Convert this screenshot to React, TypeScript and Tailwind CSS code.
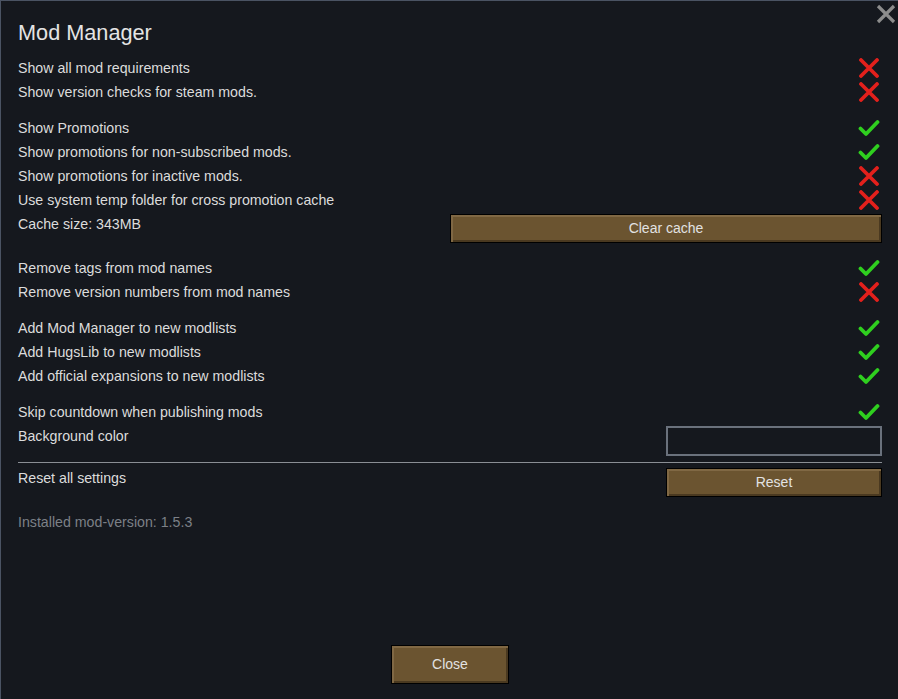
import React from 'react'

const font = { fontFamily: '"Liberation Sans", Arial, sans-serif' }

function Cross() {
  return (
    <svg width="22" height="20" viewBox="0 0 22 20" className="shrink-0">
      <path d="M3 2 L19 18 M19 2 L3 18" stroke="#e3201c" strokeWidth="3.8" strokeLinecap="round" />
    </svg>
  )
}

function Check() {
  return (
    <svg width="22" height="18" viewBox="0 0 22 18" className="shrink-0">
      <path d="M2.5 9.5 L8 15 L19.5 3" stroke="#2fcf1f" strokeWidth="3.8" strokeLinecap="round" strokeLinejoin="round" fill="none" />
    </svg>
  )
}

function Toggle({ label, on }: { label: string; on: boolean }) {
  return (
    <div className="flex h-6 items-center justify-between">
      <span className="leading-6">{label}</span>
      <span className="mr-[1px] flex w-[24px] justify-center">{on ? <Check /> : <Cross />}</span>
    </div>
  )
}

function BrownButton({ children, className }: { children: React.ReactNode; className: string }) {
  return (
    <button
      className={`border border-black bg-[#6b5430] text-[14px] text-[#e2e2e2] shadow-[inset_2px_2px_0_#806844,inset_-2px_-2px_0_#4a3920] ${className}`}
    >
      {children}
    </button>
  )
}

export default function App() {
  return (
    <div
      style={font}
      className="relative flex h-[699px] w-[898px] flex-col border-l border-t border-[#4a5363] bg-[#15181e] pl-[17px] pr-[16px] text-[14.2px] text-[#dcdcdc]"
    >
      <button className="absolute right-[2px] top-[3px]">
        <svg width="20" height="20" viewBox="0 0 20 20">
          <path d="M2 2 L18 18 M18 2 L2 18" stroke="#8c8c8c" strokeWidth="3.2" />
        </svg>
      </button>

      <h1 className="mt-[18px] mb-[9px] h-[28px] text-[21.7px] leading-[28px] text-[#e4e4e4]">Mod Manager</h1>

      <Toggle label="Show all mod requirements" on={false} />
      <Toggle label="Show version checks for steam mods." on={false} />

      <div className="mt-3">
        <Toggle label="Show Promotions" on={true} />
        <Toggle label="Show promotions for non-subscribed mods." on={true} />
        <Toggle label="Show promotions for inactive mods." on={false} />
        <Toggle label="Use system temp folder for cross promotion cache" on={false} />
        <div className="flex h-8 items-start justify-between">
          <span className="leading-6">Cache size: 343MB</span>
          <BrownButton className="mt-[2px] h-[29px] w-[432px]">Clear cache</BrownButton>
        </div>
      </div>

      <div className="mt-3">
        <Toggle label="Remove tags from mod names" on={true} />
        <Toggle label="Remove version numbers from mod names" on={false} />
      </div>

      <div className="mt-3">
        <Toggle label="Add Mod Manager to new modlists" on={true} />
        <Toggle label="Add HugsLib to new modlists" on={true} />
        <Toggle label="Add official expansions to new modlists" on={true} />
      </div>

      <div className="mt-3">
        <Toggle label="Skip countdown when publishing mods" on={true} />
        <div className="flex h-8 items-start justify-between">
          <span className="leading-6">Background color</span>
          <div className="mt-[2px] h-[30px] w-[216px] border-2 border-[#6a717c] bg-[#15181e]" />
        </div>
      </div>

      <div className="mt-[6px] h-px bg-[#8a8e94]" />

      <div className="mt-[3px] flex h-8 items-start justify-between">
        <span className="leading-6">Reset all settings</span>
        <BrownButton className="mt-[2px] h-[29px] w-[216px]">Reset</BrownButton>
      </div>

      <div className="mt-3 h-6 leading-6 text-[#7c8087]">Installed mod-version: 1.5.3</div>

      <div className="mt-auto flex justify-center pb-[15px]">
        <BrownButton className="h-[39px] w-[118px]">Close</BrownButton>
      </div>
    </div>
  )
}
